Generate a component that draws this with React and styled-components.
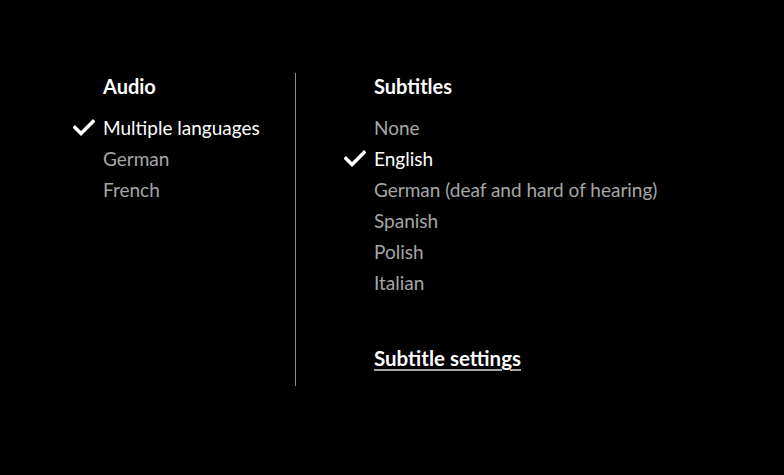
import React from "react";
import styled, { createGlobalStyle } from "styled-components";

const GlobalStyle = createGlobalStyle`
  html, body {
    margin: 0;
    padding: 0;
    background: #000;
  }
  body {
    width: 784px;
    height: 475px;
    overflow: hidden;
    font-family: "Lato", "Liberation Sans", sans-serif;
  }
`;

const audioOptions = [
  { label: "Multiple languages", selected: true },
  { label: "German" },
  { label: "French" },
];

const subtitleOptions = [
  { label: "None" },
  { label: "English", selected: true },
  { label: "German (deaf and hard of hearing)" },
  { label: "Spanish" },
  { label: "Polish" },
  { label: "Italian" },
];

const Check = () => (
  <svg width="22" height="17" viewBox="0 0 22 17">
    <path
      d="M2 8.5 L8 14.5 L20 2.5"
      fill="none"
      stroke="#fff"
      strokeWidth="3.4"
      strokeLinecap="square"
    />
  </svg>
);

const OptionList = ({ options }) => (
  <List>
    {options.map((o) => (
      <Item key={o.label} $selected={o.selected}>
        <CheckSlot>{o.selected && <Check />}</CheckSlot>
        {o.label}
      </Item>
    ))}
  </List>
);

const App = () => {
  return (
    <>
      <GlobalStyle />
      <Panel>
        <AudioColumn>
          <Title>Audio</Title>
          <OptionList options={audioOptions} />
        </AudioColumn>
        <SubtitleColumn>
          <Title>Subtitles</Title>
          <OptionList options={subtitleOptions} />
          <SettingsLink>Subtitle settings</SettingsLink>
        </SubtitleColumn>
      </Panel>
    </>
  );
};

export default App;

const Panel = styled.div`
  display: flex;
  margin-top: 73px;
  padding-left: 73px;
`;

const AudioColumn = styled.div`
  width: 222px;
  border-right: 1px solid #8c8c8c;
`;

const SubtitleColumn = styled.div`
  padding-left: 48px;
  padding-bottom: 12px;
`;

const Title = styled.div`
  padding-left: 30px;
  height: 26px;
  line-height: 26px;
  font-size: 20px;
  font-weight: 700;
  color: #fff;
`;

const List = styled.div`
  margin-top: 13px;
  display: flex;
  flex-direction: column;
`;

const Item = styled.div`
  display: flex;
  align-items: center;
  height: 31px;
  font-size: 19px;
  color: ${(p) => (p.$selected ? "#fff" : "#a6a6a6")};
`;

const CheckSlot = styled.span`
  display: flex;
  align-items: center;
  width: 30px;
  flex-shrink: 0;
`;

const SettingsLink = styled.div`
  margin-top: 45px;
  margin-left: 30px;
  height: 31px;
  line-height: 31px;
  font-size: 20.5px;
  font-weight: 700;
  color: #fff;
  text-decoration: underline;
  text-decoration-color: #a6a6a6;
  text-decoration-thickness: 2px;
  text-underline-offset: 3px;
`;
